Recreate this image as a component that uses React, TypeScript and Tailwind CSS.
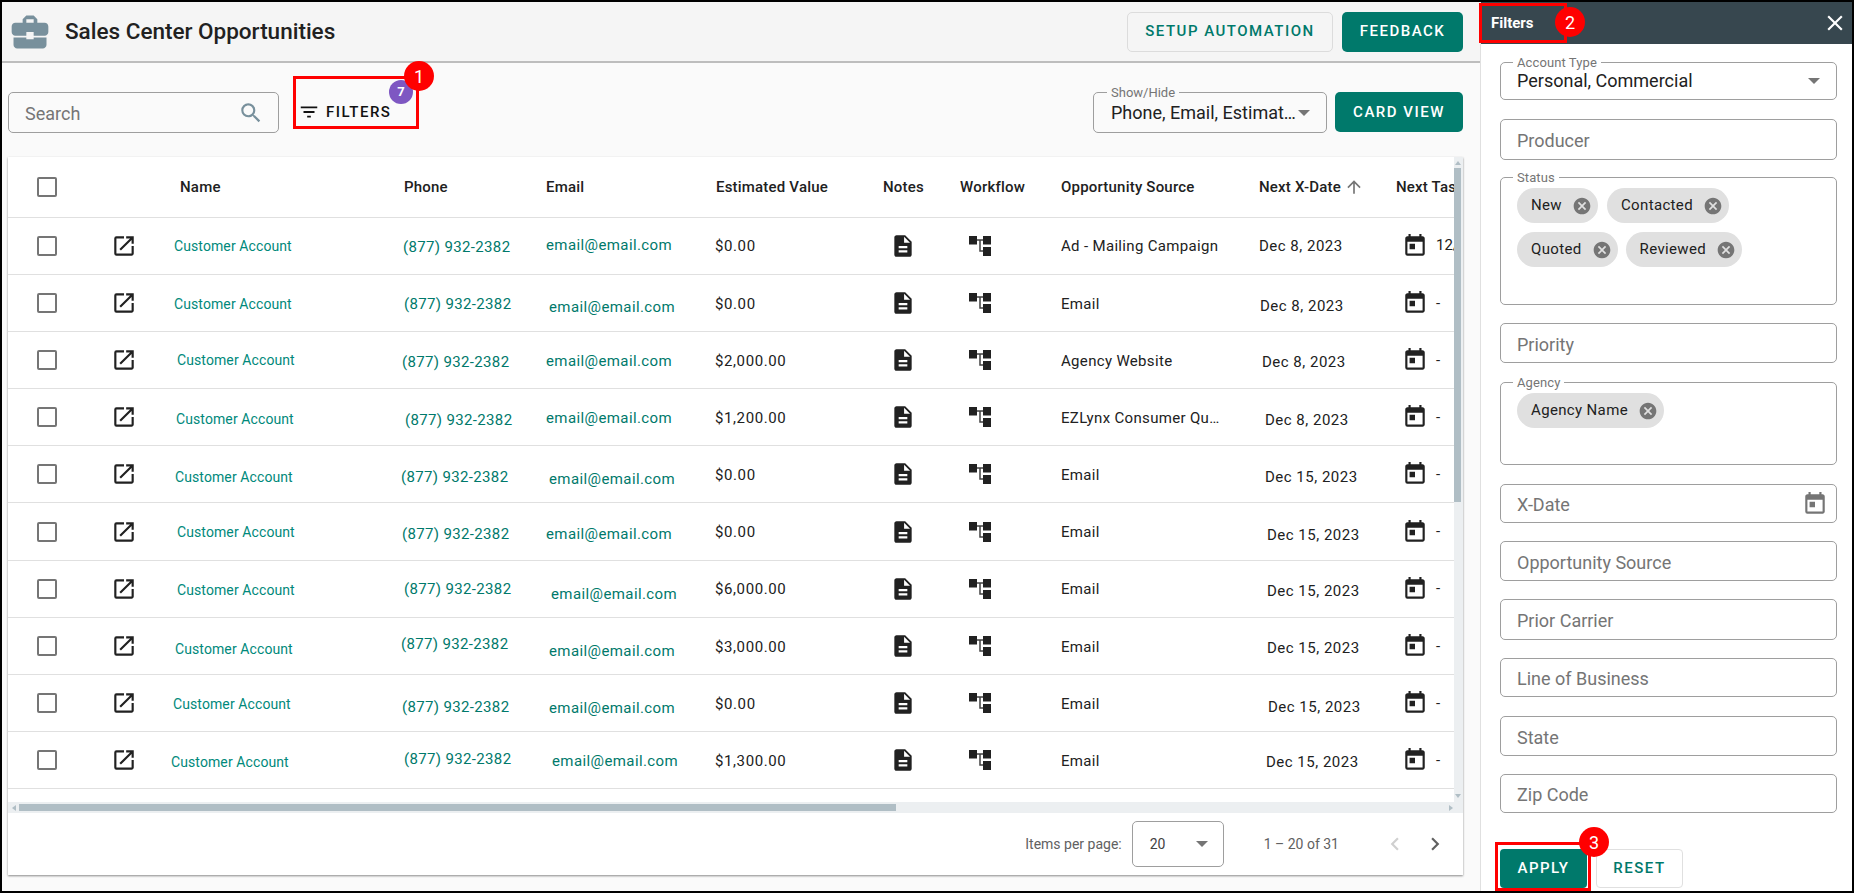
import { ReactNode } from 'react';
import { MdBusinessCenter, MdCancel, MdClose, MdDescription, MdFilterList, MdOpenInNew, MdSearch, MdToday, MdArrowUpward, MdChevronLeft, MdChevronRight } from 'react-icons/md';

const GRID = 'grid w-max grid-cols-[90px_72px_230px_140px_170px_170px_75px_100px_200px_135px_200px]';

// the screenshot's cells are not quite aligned from row to row, so each row keeps its own x / dy
const rows = [
  { name: [4, 0], phone: [3, 1], email: [6, -1], value: '$0.00', source: 'Ad - Mailing Campaign', date: 'Dec 8, 2023', dateAt: [4, 0], task: '12/1/2023' },
  { name: [4, 1], phone: [4, 0], email: [9, 3], value: '$0.00', source: 'Email', date: 'Dec 8, 2023', dateAt: [5, 2], task: '-' },
  { name: [7, 0], phone: [2, 1], email: [6, 0], value: '$2,000.00', source: 'Agency Website', date: 'Dec 8, 2023', dateAt: [7, 1], task: '-' },
  { name: [6, 1], phone: [5, 2], email: [6, 0], value: '$1,200.00', source: 'EZLynx Consumer Quote', date: 'Dec 8, 2023', dateAt: [10, 2], task: '-' },
  { name: [5, 2], phone: [1, 2], email: [9, 4], value: '$0.00', source: 'Email', date: 'Dec 15, 2023', dateAt: [10, 2], task: '-' },
  { name: [7, 0], phone: [2, 2], email: [6, 2], value: '$0.00', source: 'Email', date: 'Dec 15, 2023', dateAt: [12, 3], task: '-' },
  { name: [7, 1], phone: [4, 0], email: [11, 5], value: '$6,000.00', source: 'Email', date: 'Dec 15, 2023', dateAt: [12, 2], task: '-' },
  { name: [5, 3], phone: [1, -3], email: [9, 4], value: '$3,000.00', source: 'Email', date: 'Dec 15, 2023', dateAt: [12, 1], task: '-' },
  { name: [3, 0], phone: [2, 3], email: [9, 4], value: '$0.00', source: 'Email', date: 'Dec 15, 2023', dateAt: [13, 3], task: '-' },
  { name: [1, 1], phone: [4, -2], email: [12, 0], value: '$1,300.00', source: 'Email', date: 'Dec 15, 2023', dateAt: [11, 1], task: '-' },
];

const Cell = ({ at, children, className = '' }: { at: number[]; children: ReactNode; className?: string }) => {
  const shift = at[1] + 1;
  return (
    <div
      className={`flex items-center whitespace-nowrap ${className}`}
      style={{ paddingLeft: at[0], paddingTop: shift > 0 ? shift * 2 : 0, paddingBottom: shift < 0 ? -shift * 2 : 0 }}
    >
      {children}
    </div>
  );
};

const Checkbox = () => <div className="h-5 w-5 rounded-[2px] border-2 border-[#757575]" />;

const Caret = ({ className = '' }: { className?: string }) => (
  <svg width="12" height="6" viewBox="0 0 12 6" className={className}>
    <path d="M0 0h12L6 6z" fill="#757575" />
  </svg>
);

const WorkflowIcon = () => (
  <svg width="22" height="20" viewBox="0 0 22 20">
    <path d="M8 4h6M11 4v11h3" fill="none" stroke="#424242" strokeWidth="1.5" />
    <path d="M0 0h8v8.5H0zM14 0h8v8.5h-8zM14 11h8v9h-8z" fill="#212121" />
  </svg>
);

const Marker = ({ n, className }: { n: number; className: string }) => (
  <div className={`absolute z-10 flex h-[30px] w-[30px] items-center justify-center rounded-full bg-[#ff0000] text-[18px] text-white ${className}`}>
    {n}
  </div>
);

const HEAD = 'flex items-center text-[15px] font-medium tracking-[0.2px] whitespace-nowrap text-[#212121]';

const TableHead = () => (
  <div className={`${GRID} h-[60.5px] border-b border-[#e0e0e0]`}>
    <div className="flex items-center pl-[29px]"><Checkbox /></div>
    <div />
    <div className={`${HEAD} pl-[10px]`}>Name</div>
    <div className={`${HEAD} pl-[4px]`}>Phone</div>
    <div className={`${HEAD} pl-[6px]`}>Email</div>
    <div className={`${HEAD} pl-[6px]`}>Estimated Value</div>
    <div className={`${HEAD} pl-[3px]`}>Notes</div>
    <div className={`${HEAD} pl-[5px]`}>Workflow</div>
    <div className={`${HEAD} pl-[6px]`}>Opportunity Source</div>
    <div className={`${HEAD} pl-[4px]`}>
      Next X-Date
      <MdArrowUpward size={20} className="ml-[3px] text-[#757575]" />
    </div>
    <div className={`${HEAD} pl-[6px]`}>Next Task</div>
  </div>
);

const TableRow = ({ row }: { row: (typeof rows)[number] }) => (
  <div className={`${GRID} h-[57.2px] border-b border-[#e0e0e0] text-[15px] text-[#212121]`}>
    <div className="flex items-center pl-[29px]"><Checkbox /></div>
    <div className="flex items-center pl-[13px]"><MdOpenInNew size={26} /></div>
    <Cell at={row.name} className="text-[14px] tracking-[0.1px] text-[#00897b]">Customer Account</Cell>
    <Cell at={row.phone} className="tracking-[0.35px] text-[#00796b]">(877) 932-2382</Cell>
    <Cell at={row.email} className="tracking-[0.4px] text-[#00796b]">email@email.com</Cell>
    <Cell at={[5, 0]} className="tracking-[0.6px]">{row.value}</Cell>
    <div className="flex items-center pl-[10px]"><MdDescription size={26} /></div>
    <div className="flex items-center pl-[14px]"><WorkflowIcon /></div>
    <Cell at={[6, 0]} className="tracking-[0.33px]">
      <span className="w-[162px] truncate">{row.source}</span>
    </Cell>
    <Cell at={row.dateAt} className="tracking-[0.5px]">{row.date}</Cell>
    <div className="flex items-center pl-[12px]">
      <MdToday size={26} />
      <span className="ml-[8px]">{row.task}</span>
    </div>
  </div>
);

const Scrollbars = () => (
  <div className="flex w-[9px] flex-col items-start bg-[#eceff1]">
    <div className="flex h-[11px] w-[7px] items-center justify-center">
      <div className="h-0 w-0 border-x-[3px] border-b-[4px] border-x-transparent border-b-[#b0bec5]" />
    </div>
    <div className="h-[334px] w-[7px] bg-[#b0bec5]" />
    <div className="mt-auto mb-[4px] flex h-[4px] w-[7px] justify-center">
      <div className="h-0 w-0 border-x-[3px] border-t-[4px] border-x-transparent border-t-[#b0bec5]" />
    </div>
  </div>
);

const Chip = ({ label }: { label: string }) => (
  <div className="flex h-[35px] items-center rounded-full bg-[#e0e0e0] pr-[6px] pl-[14px] text-[15px] tracking-[0.35px] text-[#212121]">
    {label}
    <MdCancel size={20} className="ml-[10px] text-[#757575]" />
  </div>
);

const Legend = ({ text }: { text: string }) => (
  <span className="absolute top-[-8px] left-[12px] bg-white px-[4px] text-[13px] leading-[15px] tracking-[0.1px] text-[#757575]">{text}</span>
);

const Input = ({ label, className, children }: { label: string; className: string; children?: ReactNode }) => (
  <div className={`flex items-center justify-between rounded-[5px] border border-[#9e9e9e] pr-[8px] pl-[16px] text-[18px] text-[#757575] ${className}`}>
    <span className="pt-[2px]">{label}</span>
    {children}
  </div>
);

export default function App() {
  return (
    <div className="flex h-[893px] w-[1854px] overflow-hidden border-2 border-black bg-white font-['Roboto',sans-serif]">
      <div className="flex w-[1479px] flex-col border-r border-[#e0e0e0] bg-[#fafafa]">
        <header className="flex h-[61px] items-center border-b-2 border-[#bdbdbd] bg-[#f5f5f5] pr-[17px] pl-[6px]">
          <MdBusinessCenter size={44} className="text-[#78909c]" />
          <h1 className="ml-[13px] text-[22.5px] font-medium text-[#212121]">Sales Center Opportunities</h1>
          <button className="ml-auto h-10 w-[206px] rounded-[5px] border border-[#dcdcdc] text-[15px] font-medium tracking-[1.5px] text-[#00796b]">
            SETUP AUTOMATION
          </button>
          <button className="ml-[9px] h-10 w-[121px] rounded-[5px] bg-[#00796b] text-[15px] font-medium tracking-[1.5px] text-white">
            FEEDBACK
          </button>
        </header>

        <div className="flex h-[94px] items-start pt-[29px] pr-[17px] pl-[6px]">
          <div className="flex h-[41px] w-[271px] items-center justify-between rounded-[5px] border border-[#9e9e9e] pr-[14px] pl-[16px] text-[18px] text-[#757575]">
            <span className="pt-[2px]">Search</span>
            <MdSearch size={26} className="text-[#78909c]" />
          </div>
          <div className="relative mt-[-16px] ml-[14px] flex h-[53px] w-[126px] items-center pt-[19px] pl-[5px]">
            <div className="absolute inset-0 border-[3px] border-[#ff0000]" />
            <MdFilterList size={22} className="text-[#111]" />
            <span className="ml-[6px] text-[15px] font-medium tracking-[1.5px] text-[#111]">FILTERS</span>
            <div className="absolute top-[4px] left-[96px] flex h-6 w-6 items-center justify-center rounded-full bg-[#7e57c2] text-[13px] font-bold text-white">7</div>
            <Marker n={1} className="top-[-15px] right-[-15px]" />
          </div>
          <div className="relative ml-auto flex h-[41px] w-[234px] items-center rounded-[5px] border border-[#9e9e9e] pr-[16px] pl-[17px] text-[18px] text-[#212121]">
            <span className="absolute top-[-8px] left-[13px] bg-[#fafafa] px-[4px] text-[13px] leading-[15px] text-[#757575]">Show/Hide</span>
            <span className="truncate">Phone, Email, Estimated Value</span>
            <Caret className="shrink-0" />
          </div>
          <button className="ml-[8px] h-10 w-[128px] rounded-[5px] bg-[#00796b] text-[15px] font-medium tracking-[1.5px] text-white">
            CARD VIEW
          </button>
        </div>

        <section className="mr-[17px] ml-[6px] flex h-[718px] flex-col bg-white shadow-[0_1px_2px_rgba(0,0,0,0.45)]">
          <div className="flex h-[645px]">
            <div className="w-[1446px] overflow-hidden">
              <TableHead />
              {rows.map((row, i) => (
                <TableRow key={i} row={row} />
              ))}
            </div>
            <Scrollbars />
          </div>
          <div className="flex h-[11px] items-center bg-[#eceff1]">
            <div className="ml-[4px] h-0 w-0 border-y-[3px] border-r-[4px] border-y-transparent border-r-[#b0bec5]" />
            <div className="ml-[3px] h-[7px] w-[877px] bg-[#b0bec5]" />
            <div className="mr-[10px] ml-auto h-0 w-0 border-y-[3px] border-l-[4px] border-y-transparent border-l-[#b0bec5]" />
          </div>
          <footer className="flex h-[62px] items-center text-[14px] text-[#616161]">
            <span className="ml-auto">Items per page:</span>
            <div className="ml-[10px] flex h-[46px] w-[92px] items-center justify-between rounded-[5px] border border-[#9e9e9e] pr-[15px] pl-[17px] text-[#424242]">
              20
              <Caret />
            </div>
            <span className="ml-[40px]">1 – 20 of 31</span>
            <MdChevronLeft size={26} className="ml-[43px] text-[#d0d0d0]" />
            <MdChevronRight size={26} className="mr-[15px] ml-[14px] text-[#616161]" />
          </footer>
        </section>
      </div>

      <aside className="flex w-[371px] flex-col">
        <div className="relative flex h-[42px] items-center justify-between bg-[#37474f] pr-[4px] pl-[10px] text-white">
          <div className="absolute top-[1px] left-[-2px] h-10 w-[88px] border-[3px] border-[#ff0000]" />
          <span className="text-[15px] font-bold">Filters</span>
          <Marker n={2} className="top-[5px] left-[74px]" />
          <MdClose size={26} />
        </div>
        <div className="flex flex-col pr-[15px] pl-[19px]">
          <div className="relative mt-[18px] flex h-[38px] items-center justify-between rounded-[5px] border border-[#9e9e9e] pr-[16px] pl-[16px] text-[18px] text-[#212121]">
            <Legend text="Account Type" />
            <span className="pb-[2px]">Personal, Commercial</span>
            <Caret />
          </div>
          <Input label="Producer" className="mt-[19px] h-[41px]" />
          <div className="relative mt-[17px] flex h-[128px] flex-col gap-[9px] rounded-[5px] border border-[#9e9e9e] pt-[10px] pl-[16px]">
            <Legend text="Status" />
            <div className="flex gap-[9px]"><Chip label="New" /><Chip label="Contacted" /></div>
            <div className="flex gap-[8px]"><Chip label="Quoted" /><Chip label="Reviewed" /></div>
          </div>
          <Input label="Priority" className="mt-[18px] h-10" />
          <div className="relative mt-[19px] flex h-[83px] items-start rounded-[5px] border border-[#9e9e9e] pt-[10px] pl-[16px]">
            <Legend text="Agency" />
            <Chip label="Agency Name" />
          </div>
          <Input label="X-Date" className="mt-[19px] h-[39px]">
            <MdToday size={26} />
          </Input>
          <Input label="Opportunity Source" className="mt-[18px] h-10" />
          <Input label="Prior Carrier" className="mt-[18px] h-[41px]" />
          <Input label="Line of Business" className="mt-[18px] h-[39px]" />
          <Input label="State" className="mt-[19px] h-10" />
          <Input label="Zip Code" className="mt-[18px] h-[39px]" />
          <div className="mt-[29px] ml-[-5px] flex items-start">
            <div className="relative flex h-[49px] w-[96px] items-end border-[3px] border-[#ff0000] pl-[2px]">
              <button className="h-[39px] w-[87px] rounded-[4px] bg-[#00796b] text-[15px] font-medium tracking-[1.5px] text-white">APPLY</button>
              <Marker n={3} className="top-[-18px] right-[-21px]" />
            </div>
            <button className="mt-[7px] ml-[5px] h-[39px] w-[87px] rounded-[4px] border border-[#e0e0e0] text-[15px] font-medium tracking-[1.5px] text-[#00796b]">RESET</button>
          </div>
        </div>
      </aside>
    </div>
  );
}
